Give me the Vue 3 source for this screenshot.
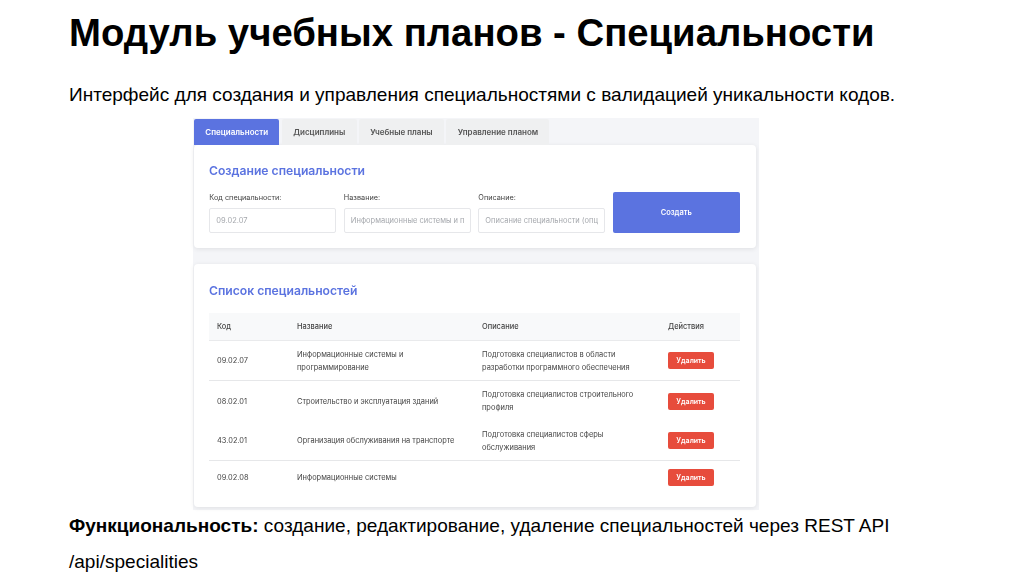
<template>
  <main class="slide">
    <h1>Модуль учебных планов - Специальности</h1>
    <p class="lead">Интерфейс для создания и управления специальностями с валидацией уникальности кодов.</p>
    <section class="shot">
      <nav class="tabs">
        <span v-for="(t, i) in tabs" :key="t" class="tab" :class="{ active: i === 0 }">{{ t }}</span>
      </nav>
      <div class="card form-card">
        <h2>Создание специальности</h2>
        <div class="form">
          <label v-for="f in fields" :key="f.label" class="field">
            <span>{{ f.label }}</span>
            <input :placeholder="f.placeholder" />
          </label>
          <button class="create">Создать</button>
        </div>
      </div>
      <div class="card list-card">
        <h2>Список специальностей</h2>
        <table>
          <colgroup>
            <col class="c1" /><col class="c2" /><col class="c3" /><col class="c4" />
          </colgroup>
          <thead>
            <tr><th>Код</th><th>Название</th><th>Описание</th><th>Действия</th></tr>
          </thead>
          <tbody>
            <tr v-for="r in rows" :key="r.code" :class="r.cls">
              <td>{{ r.code }}</td>
              <td>{{ r.name }}</td>
              <td>{{ r.desc }}</td>
              <td><button class="del">Удалить</button></td>
            </tr>
          </tbody>
        </table>
      </div>
    </section>
    <p class="foot"><b>Функциональность:</b> создание, редактирование, удаление специальностей через REST API<br />/api/specialities</p>
  </main>
</template>

<script setup>
const tabs = ['Специальности', 'Дисциплины', 'Учебные планы', 'Управление планом']
const fields = [
  { label: 'Код специальности:', placeholder: '09.02.07' },
  { label: 'Название:', placeholder: 'Информационные системы и программирование' },
  { label: 'Описание:', placeholder: 'Описание специальности (опционально)' }
]
const rows = [
  { code: '09.02.07', name: 'Информационные системы и программирование', desc: 'Подготовка специалистов в области разработки программного обеспечения', cls: 'r1' },
  { code: '08.02.01', name: 'Строительство и эксплуатация зданий', desc: 'Подготовка специалистов строительного профиля', cls: 'r2' },
  { code: '43.02.01', name: 'Организация обслуживания на транспорте', desc: 'Подготовка специалистов сферы обслуживания', cls: 'r3' },
  { code: '09.02.08', name: 'Информационные системы', desc: '', cls: 'r4' }
]
</script>

<style>
html, body { margin: 0; background: #fff; }
</style>

<style scoped>
.slide {
  width: 1024px;
  height: 576px;
  box-sizing: border-box;
  padding: 12px 0 0 69px;
  overflow: hidden;
  background: #fff;
  color: #000;
  font-family: "Liberation Sans", Arial, sans-serif;
}
h1 {
  margin: 0;
  font-size: 38.3px;
  line-height: 41px;
  font-weight: 700;
}
.lead {
  margin: 31px 0 0;
  font-size: 19.05px;
  line-height: 22px;
}
.shot {
  width: 566px;
  height: 392px;
  margin: 12px 0 0 124px;
  padding: 1px 3px 0 1px;
  box-sizing: border-box;
  background: #f4f5f8;
  font-family: Inter, sans-serif;
  filter: blur(0.55px);
}
.tabs { display: flex; height: 26px; gap: 2.5px; }
.tab {
  display: flex;
  align-items: center;
  padding: 0 11.3px;
  background: #eff0f1;
  color: #555;
  font-size: 8px;
  font-weight: 600;
  border-radius: 2px 2px 0 0;
}
.tab.active { background: #5b73e0; color: #fff; }
.card {
  background: #fff;
  border-radius: 4px;
  box-shadow: 0 1px 5px rgba(0, 0, 0, 0.09);
  padding: 0 15px;
}
.form-card { height: 103px; padding-top: 18px; box-sizing: border-box; }
.list-card { height: 243px; margin-top: 16px; padding-top: 19px; box-sizing: border-box; }
h2 {
  margin: 0;
  color: #5b73e0;
  font-size: 12.15px;
  line-height: 15px;
  font-weight: 600;
}
.form {
  display: grid;
  grid-template-columns: repeat(4, 127px);
  column-gap: 7.5px;
  margin: 14px 0 0 0.3px;
  align-items: end;
}
.field { display: flex; flex-direction: column; gap: 4px; color: #444; font-size: 7.3px; line-height: 12px; }
input {
  width: 100%;
  height: 25px;
  box-sizing: border-box;
  padding: 0 6px;
  border: 1px solid #e6e7ea;
  border-radius: 2px;
  background: #fff;
  font: 7.5px Inter, sans-serif;
  outline: none;
}
input::placeholder { color: #a5a8ad; }
.create {
  height: 41px;
  border: 0;
  border-radius: 2px;
  background: #5b73e0;
  color: #fff;
  font: 600 7.5px Inter, sans-serif;
}
table {
  width: 531px;
  margin-top: 15px;
  border-collapse: collapse;
  table-layout: fixed;
  color: #444;
  font-size: 7.45px;
  line-height: 13px;
}
.c1 { width: 80px; }
.c2 { width: 185px; }
.c3 { width: 186px; }
.c4 { width: 80px; }
th {
  height: 27px;
  padding: 0 8px;
  background: #f8f9fa;
  text-align: left;
  font-weight: 500;
  border-bottom: 1px solid #e9eaec;
}
td { padding: 0 8px; vertical-align: middle; }
.r1 td { height: 39px; border-bottom: 1px solid #e6e7e9; }
.r2 td { height: 40px; }
.r3 td { height: 39px; border-bottom: 1px solid #e6e7e9; }
.r4 td { height: 33px; }
.del {
  display: block;
  width: 46px;
  height: 17px;
  padding: 0;
  border: 0;
  border-radius: 2px;
  background: #e74c3c;
  color: #fff;
  font: 600 7px Inter, sans-serif;
}
.foot {
  margin: -2px 0 0;
  font-size: 19.05px;
  line-height: 36px;
}
</style>
